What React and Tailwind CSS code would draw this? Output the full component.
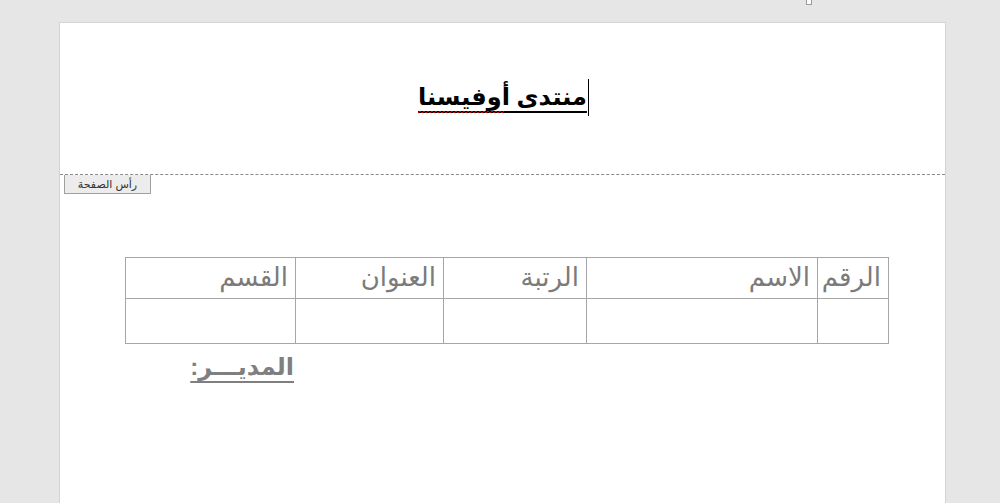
const cols = [
  { label: "الرقم", w: "w-[71px]" },
  { label: "الاسم", w: "w-[231px]" },
  { label: "الرتبة", w: "w-[143px]" },
  { label: "العنوان", w: "w-[148px]" },
  { label: "القسم", w: "w-[170px]" },
];

const App = () => {
  return (
    <div
      className="relative h-[503px] w-[1000px] overflow-hidden bg-[#e6e6e6] pt-[22px]"
      style={{ fontFamily: '"Liberation Sans", "DejaVu Sans", sans-serif' }}>
      {/* علامة المسطرة */}
      <div className="absolute left-[806px] top-0 h-[5px] w-[6px] border border-t-0 border-[#9a9a9a] bg-white" />

      <div className="ml-[59px] h-[490px] w-[887px] border border-[#d4d4d4] bg-white">
        {/* رأس الصفحة */}
        <div className="flex h-[151px] items-start justify-center pt-[50px]" dir="rtl">
          <div className="relative h-[48px]">
            <span className="text-[24px] font-bold leading-[48px] text-black underline decoration-[2px] underline-offset-[6px]">
              منتدى أوفيسنا
            </span>
            {/* خط التدقيق الإملائي */}
            <svg
              className="absolute left-0 top-[37px]"
              width="86"
              height="4"
              viewBox="0 0 86 4">
              <path
                d="M0 3 L2 1 L4 3 L6 1 L8 3 L10 1 L12 3 L14 1 L16 3 L18 1 L20 3 L22 1 L24 3 L26 1 L28 3 L30 1 L32 3 L34 1 L36 3 L38 1 L40 3 L42 1 L44 3 L46 1 L48 3 L50 1 L52 3 L54 1 L56 3 L58 1 L60 3 L62 1 L64 3 L66 1 L68 3 L70 1 L72 3 L74 1 L76 3 L78 1 L80 3 L82 1 L84 3 L86 1"
                fill="none"
                stroke="#d00000"
                strokeWidth="1"
              />
            </svg>
            <span className="absolute right-[-2px] top-[6px] h-[37px] w-px bg-black" />
          </div>
        </div>
        <div className="border-t border-dashed border-[#8a8a8a]" />
        <div className="ml-[4px] flex h-[19px] w-[87px] items-center justify-center border border-t-0 border-[#a0a0a0] bg-[#ececec] text-[11px] text-[#333]">
          رأس الصفحة
        </div>

        {/* الجدول */}
        <div className="ml-[66px] mt-[63px] w-[763px]" dir="rtl">
          <table className="w-[763px] table-fixed border-collapse">
            <tbody>
              <tr className="h-[41px]">
                {cols.map(c => (
                  <td
                    key={c.label}
                    className={`${c.w} border border-[#a6a6a6] px-[7px] text-right align-top text-[26px] leading-[38px] text-[#7b7b7b]`}>
                    {c.label}
                  </td>
                ))}
              </tr>
              <tr className="h-[45px]">
                {cols.map(c => (
                  <td key={c.label} className={`${c.w} border border-[#a6a6a6]`} />
                ))}
              </tr>
            </tbody>
          </table>
          <div className="mr-[595px] mt-[8px] text-[24px] font-bold leading-[30px] text-[#7f7f7f] underline decoration-[2px] underline-offset-[6px]">
            المديـــر:
          </div>
        </div>
      </div>
    </div>
  );
};

export default App;
